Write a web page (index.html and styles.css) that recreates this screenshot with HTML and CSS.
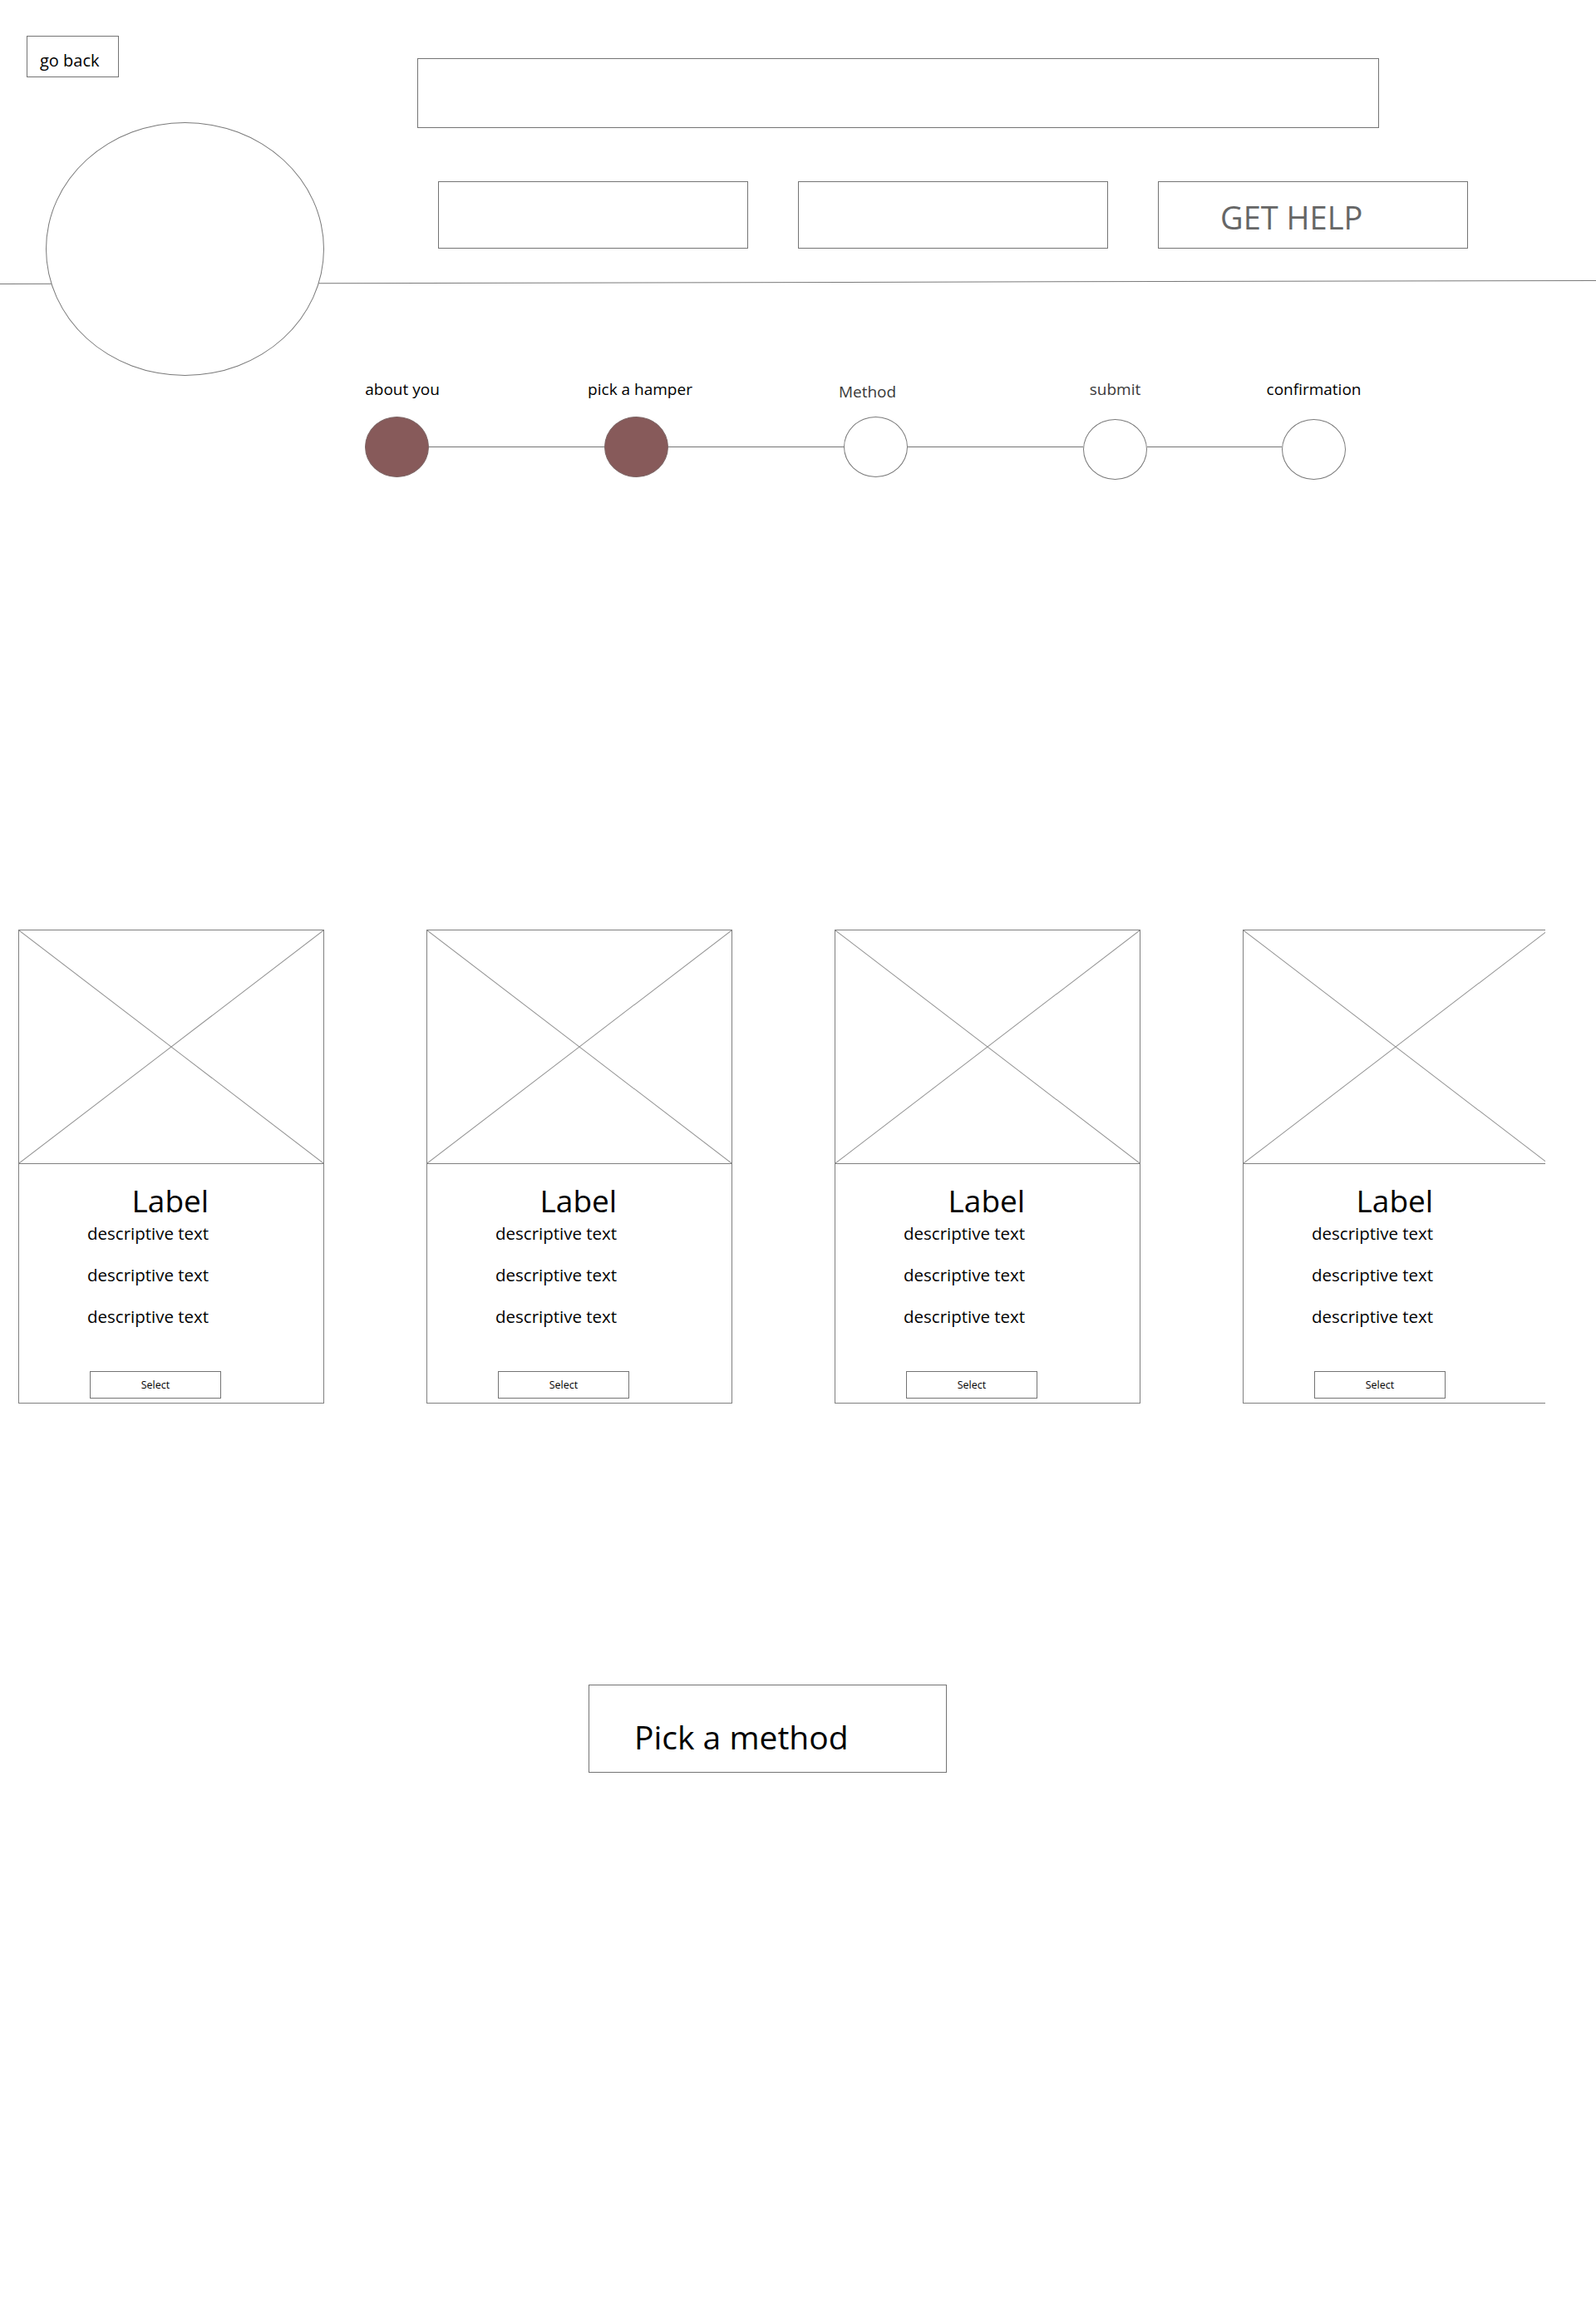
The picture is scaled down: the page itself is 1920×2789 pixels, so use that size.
FILE: index.html
```html
<!DOCTYPE html>
<html lang="en">
<head>
<meta charset="utf-8">
<title>Pick a hamper</title>
<link rel="stylesheet" href="styles.css">
</head>
<body>
<div class="page">
  <div class="divider"></div>
  <header class="header">
    <div class="header-left">
      <button class="back-btn">go back</button>
      <div class="logo"></div>
    </div>
    <div class="header-right">
      <div class="search-box"></div>
      <nav class="nav">
        <div class="nav-btn"></div>
        <div class="nav-btn"></div>
        <div class="nav-btn nav-btn--help">GET HELP</div>
      </nav>
    </div>
  </header>

  <section class="stepper">
    <div class="step">
      <span class="step-label step-label--about">about you</span>
      <span class="dot dot--done"></span>
    </div>
    <div class="connector"></div>
    <div class="step">
      <span class="step-label step-label--hamper">pick a hamper</span>
      <span class="dot dot--done"></span>
    </div>
    <div class="connector"></div>
    <div class="step">
      <span class="step-label step-label--light step-label--method">Method</span>
      <span class="dot"></span>
    </div>
    <div class="connector"></div>
    <div class="step">
      <span class="step-label step-label--light">submit</span>
      <span class="dot dot--low"></span>
    </div>
    <div class="connector connector--short"></div>
    <div class="step">
      <span class="step-label">confirmation</span>
      <span class="dot dot--low"></span>
    </div>
  </section>

  <section class="cards">
    <article class="card">
      <div class="card-img"><svg viewBox="0 0 100 100" preserveAspectRatio="none"><line x1="0" y1="0" x2="100" y2="100"/><line x1="100" y1="0" x2="0" y2="100"/></svg></div>
      <div class="card-body">
        <div class="card-text">
          <h3 class="card-label">Label</h3>
          <p>descriptive text</p>
          <p>descriptive text</p>
          <p>descriptive text</p>
        </div>
        <button class="select-btn">Select</button>
      </div>
    </article>
    <article class="card">
      <div class="card-img"><svg viewBox="0 0 100 100" preserveAspectRatio="none"><line x1="0" y1="0" x2="100" y2="100"/><line x1="100" y1="0" x2="0" y2="100"/></svg></div>
      <div class="card-body">
        <div class="card-text">
          <h3 class="card-label">Label</h3>
          <p>descriptive text</p>
          <p>descriptive text</p>
          <p>descriptive text</p>
        </div>
        <button class="select-btn">Select</button>
      </div>
    </article>
    <article class="card">
      <div class="card-img"><svg viewBox="0 0 100 100" preserveAspectRatio="none"><line x1="0" y1="0" x2="100" y2="100"/><line x1="100" y1="0" x2="0" y2="100"/></svg></div>
      <div class="card-body">
        <div class="card-text">
          <h3 class="card-label">Label</h3>
          <p>descriptive text</p>
          <p>descriptive text</p>
          <p>descriptive text</p>
        </div>
        <button class="select-btn">Select</button>
      </div>
    </article>
    <article class="card">
      <div class="card-img"><svg viewBox="0 0 100 100" preserveAspectRatio="none"><line x1="0" y1="0" x2="100" y2="100"/><line x1="100" y1="0" x2="0" y2="100"/></svg></div>
      <div class="card-body">
        <div class="card-text">
          <h3 class="card-label">Label</h3>
          <p>descriptive text</p>
          <p>descriptive text</p>
          <p>descriptive text</p>
        </div>
        <button class="select-btn">Select</button>
      </div>
    </article>
  </section>

  <div class="method-wrap">
    <button class="method-btn">Pick a method</button>
  </div>
</div>
</body>
</html>
```

FILE: styles.css
```css
* { box-sizing: border-box; }

html, body {
  margin: 0;
  padding: 0;
  background: #fff;
}

body {
  font-family: "Open Sans", "Noto Sans", sans-serif;
  color: #000;
}

.page {
  position: relative;
  width: 1920px;
  min-height: 2789px;
  overflow: hidden;
}

.divider {
  position: absolute;
  left: 0;
  top: 339px;
  width: 1920px;
  height: 1px;
  background: #7a7a7a;
  transform: rotate(-0.12deg);
  z-index: 0;
}

/* header */
.header {
  display: flex;
  align-items: flex-start;
  height: 452px;
}

.header-left {
  width: 502px;
  flex-shrink: 0;
  padding-left: 32px;
  display: flex;
  flex-direction: column;
  align-items: flex-start;
}

.back-btn {
  margin-top: 43px;
  width: 111px;
  height: 50px;
  border: 1px solid #747474;
  background: #fff;
  font-family: inherit;
  font-size: 20px;
  color: #000;
  text-align: left;
  padding: 8px 0 0 15px;
  line-height: normal;
  display: flex;
  align-items: center;
}

.logo {
  position: relative;
  z-index: 1;
  margin-top: 54px;
  margin-left: 23px;
  width: 335px;
  height: 305px;
  border: 1px solid #7a7a7a;
  border-radius: 50%;
  background: #fff;
}

.header-right {
  display: flex;
  flex-direction: column;
  align-items: flex-start;
}

.search-box {
  margin-top: 70px;
  width: 1157px;
  height: 84px;
  border: 1px solid #747474;
  background: #fff;
}

.nav {
  margin-top: 64px;
  padding-left: 25px;
  display: flex;
  gap: 60px;
}

.nav-btn {
  width: 373px;
  height: 81px;
  border: 1px solid #747474;
  background: #fff;
}

.nav-btn--help {
  display: flex;
  align-items: center;
  padding: 4px 0 0 74px;
  font-size: 38px;
  color: #666;
  line-height: normal;
}

/* stepper */
.stepper {
  display: flex;
  align-items: flex-start;
  margin: 3px 0 0 439px;
}

.step {
  width: 77px;
  display: flex;
  flex-direction: column;
  align-items: center;
}

.step-label {
  height: 26px;
  line-height: 26px;
  font-size: 19px;
  white-space: nowrap;
  color: #000;
}

.step-label--light { color: #3a3a3a; }
.step-label--about { margin-left: 13px; }
.step-label--hamper { margin-left: 9px; }
.step-label--method { margin-right: 20px; padding-top: 3px; }

.dot {
  margin-top: 20px;
  width: 77px;
  height: 73px;
  border: 1px solid #7a7a7a;
  border-radius: 50%;
  background: #fff;
}

.dot--done {
  background: #875a5a;
  border-color: #7d6565;
}

.dot--low { margin-top: 23px; }

.connector {
  width: 211px;
  height: 1px;
  margin-top: 82px;
  background: #747474;
}

.connector--short { width: 162px; }

/* cards */
.cards {
  display: flex;
  gap: 123px;
  margin-top: 541px;
  padding-left: 22px;
  width: 1859px;
  overflow: hidden;
}

.card {
  flex-shrink: 0;
  width: 368px;
  height: 570px;
  border: 1px solid #808080;
  display: flex;
  flex-direction: column;
}

.card-img {
  height: 281px;
  border-bottom: 1px solid #808080;
}

.card-img svg {
  display: block;
  width: 100%;
  height: 100%;
}

.card-img line {
  stroke: #959595;
  stroke-width: 1;
  vector-effect: non-scaling-stroke;
}

.card-body {
  flex: 1;
  display: flex;
  flex-direction: column;
  align-items: flex-start;
  padding: 24px 0 5px 82px;
}

.card-text {
  display: flex;
  flex-direction: column;
  align-items: flex-start;
  gap: 10px;
}

.card-label {
  align-self: flex-end;
  margin: 0 0 -9px;
  font-size: 37px;
  font-weight: 400;
  line-height: 38px;
  height: 38px;
  padding-top: 1px;
}

.card-text p {
  margin: 0;
  font-size: 20.5px;
  line-height: 40px;
  height: 40px;
}

.select-btn {
  margin: auto 0 0 3px;
  width: 158px;
  height: 33px;
  border: 1px solid #747474;
  background: #fff;
  font-family: inherit;
  font-size: 12.5px;
  color: #000;
  padding: 0;
}

/* bottom CTA */
.method-wrap {
  margin-top: 338px;
  padding-left: 708px;
}

.method-btn {
  width: 431px;
  height: 106px;
  border: 1px solid #747474;
  background: #fff;
  font-family: inherit;
  font-size: 39px;
  color: #000;
  text-align: left;
  padding: 18px 0 0 54px;
  line-height: normal;
}
```
